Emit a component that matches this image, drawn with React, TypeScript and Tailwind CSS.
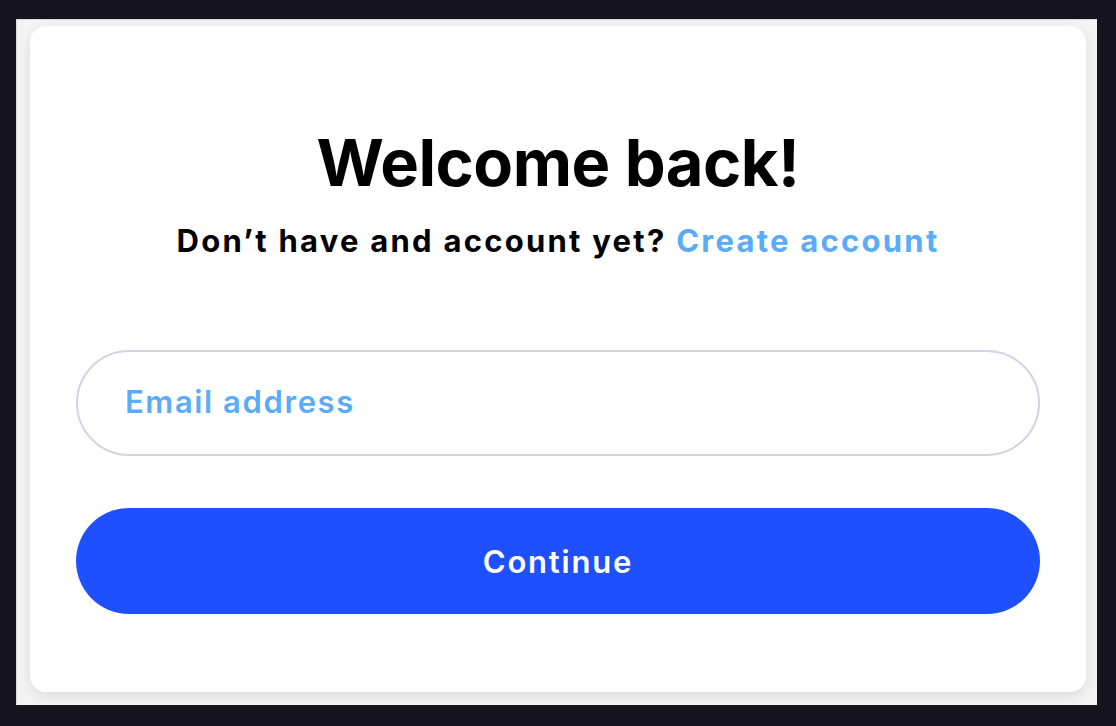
export default function App() {
  return (
    <div className="w-[1116px] h-[726px] bg-[#16141f] pt-[19px] pl-[16px]">
      <div className="w-[1081px] h-[686px] bg-[#f4f4f4] border-t border-l border-[#d9d9de] pt-[6px] pl-[13px]">
        <div
          className="w-[1056px] h-[666px] bg-white rounded-[16px] shadow-[0_4px_14px_rgba(0,0,0,0.10)] flex flex-col items-center pt-[97px] px-[46px]"
          style={{ fontFamily: "Inter, 'Noto Sans', sans-serif" }}
        >
          <h1 className="text-[65px] leading-[80px] font-bold text-black tracking-[-0.5px]">Welcome back!</h1>
          <p className="mt-[18px] text-[31px] leading-[40px] font-bold text-black tracking-[2.25px]">
            Don’t have and account yet? <span className="text-[#5aacfb]">Create account</span>
          </p>
          <div className="mt-[89px] w-full h-[106px] rounded-full border-2 border-[#d2d3e6] flex items-center pl-[47px]">
            <span className="text-[31px] font-semibold text-[#5aacfb] tracking-[1.6px] -mt-[2px]">Email address</span>
          </div>
          <button className="mt-[52px] w-full h-[106px] rounded-full bg-[#1f50ff] flex items-center justify-center">
            <span className="text-[31px] font-semibold text-white tracking-[1.8px] mt-[2px]">Continue</span>
          </button>
        </div>
      </div>
    </div>
  );
}
